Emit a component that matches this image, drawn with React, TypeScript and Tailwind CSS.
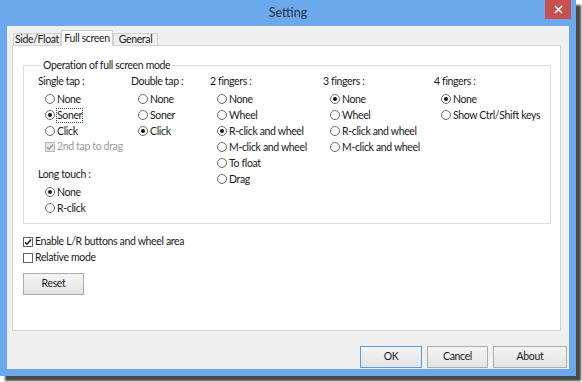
import React from "react";

function Radio({ label, checked, focus }: { label: string; checked?: boolean; focus?: boolean }) {
  return (
    <div className="flex h-[16px] items-center whitespace-nowrap pl-[7px]">
      <span className="flex h-[10px] w-[10px] shrink-0 items-center justify-center rounded-full border border-[#6b6b6b] bg-white">
        {checked && <span className="h-[4px] w-[4px] rounded-full bg-[#111]" />}
      </span>
      <span className={"ml-[2px] leading-[13px] " + (focus ? "outline outline-1 outline-dotted outline-[#444]" : "")}>
        {label}
      </span>
    </div>
  );
}

function Check({ label, checked, disabled, indent }: { label: string; checked?: boolean; disabled?: boolean; indent?: boolean }) {
  return (
    <div className={"flex h-[16px] items-center whitespace-nowrap " + (indent ? "pl-[7px]" : "")}>
      <span
        className={
          "flex h-[10px] w-[10px] shrink-0 items-center justify-center border " +
          (disabled ? "border-[#b8b8b8] bg-[#e6e6e6]" : "border-[#5f5f5f] bg-white")
        }
      >
        {checked && (
          <svg width="8" height="8" viewBox="0 0 8 8">
            <path d="M1 4.2 L3 6.2 L7 1.4" fill="none" stroke={disabled ? "#9a9a9a" : "#222"} strokeWidth="1.5" />
          </svg>
        )}
      </span>
      <span className={"ml-[2px] " + (disabled ? "text-[#9b9b9b]" : "")}>{label}</span>
    </div>
  );
}

function Header({ children }: { children: React.ReactNode }) {
  return <div className="flex h-[16px] items-center whitespace-nowrap">{children}</div>;
}

function Btn({ label, w, def }: { label: string; w: string; def?: boolean }) {
  return (
    <div
      className={
        "flex h-[22px] items-center justify-center border bg-gradient-to-b from-[#f4f4f4] to-[#e4e4e4] " +
        w +
        " " +
        (def ? "border-[#5aa0dc]" : "border-[#adadad]")
      }
    >
      {label}
    </div>
  );
}

export default function App() {
  return (
    <div className="h-[382px] w-[582px] bg-white font-['Lato',sans-serif] text-[10.5px] tracking-[-0.35px] text-[#1a1a1a]">
      <div className="flex h-[376px] w-[576px] flex-col bg-[#6ca8ec] px-[7px] pb-[7px] shadow-[5px_5px_2px_rgba(40,40,40,0.85)]">
        <div className="relative flex h-[26px] items-center justify-center">
          <span className="text-[12.5px] tracking-normal text-[#2a3440]">Setting</span>
          <div className="absolute right-[-2px] top-0 flex h-[19px] w-[26px] items-center justify-center bg-[#c75050]">
            <svg width="9" height="9" viewBox="0 0 9 9">
              <path d="M1 1 L8 8 M8 1 L1 8" stroke="white" strokeWidth="1.6" />
            </svg>
          </div>
        </div>
        <div className="flex flex-1 flex-col bg-[#f0f0f0] pt-[4px]">
          <div className="flex h-[15px] items-end whitespace-nowrap pl-[6px]">
            <div className="flex h-[12px] w-[48px] items-center justify-center border border-b-0 border-[#d0d0d0] bg-[#f0f0f0]">
              Side/Float
            </div>
            <div className="relative z-10 -mb-px flex h-[16px] w-[52px] items-center justify-center border border-b-0 border-[#d0d0d0] bg-white">
              Full screen
            </div>
            <div className="flex h-[12px] w-[45px] items-center justify-center border border-b-0 border-[#d0d0d0] bg-[#f0f0f0]">
              General
            </div>
          </div>
          <div className="ml-[5px] mr-[8px] h-[286px] border border-[#d6d6d6] bg-white pl-[10px] pr-[9px]">
            <fieldset className="mt-[12px] h-[166px] border border-[#dcdcdc] pl-[14px] pt-[2px]">
              <legend className="ml-[3px] px-[2px] leading-[14px]">Operation of full screen mode</legend>
              <div className="grid grid-cols-[93px_79px_113px_111px_1fr]">
                <div className="flex flex-col">
                  <Header>Single tap :</Header>
                  <div className="mt-[1px]">
                    <Radio label="None" />
                    <Radio label="Soner" checked focus />
                    <Radio label="Click" />
                    <Check label="2nd tap to drag" checked disabled indent />
                  </div>
                  <div className="mt-[12px]">
                    <Header>Long touch :</Header>
                  </div>
                  <div className="mt-[1px]">
                    <Radio label="None" checked />
                    <Radio label="R-click" />
                  </div>
                </div>
                <div className="flex flex-col">
                  <Header>Double tap :</Header>
                  <div className="mt-[1px]">
                    <Radio label="None" />
                    <Radio label="Soner" />
                    <Radio label="Click" checked />
                  </div>
                </div>
                <div className="flex flex-col">
                  <Header>2 fingers :</Header>
                  <div className="mt-[1px]">
                    <Radio label="None" />
                    <Radio label="Wheel" />
                    <Radio label="R-click and wheel" checked />
                    <Radio label="M-click and wheel" />
                    <Radio label="To float" />
                    <Radio label="Drag" />
                  </div>
                </div>
                <div className="flex flex-col">
                  <Header>3 fingers :</Header>
                  <div className="mt-[1px]">
                    <Radio label="None" checked />
                    <Radio label="Wheel" />
                    <Radio label="R-click and wheel" />
                    <Radio label="M-click and wheel" />
                  </div>
                </div>
                <div className="flex flex-col">
                  <Header>4 fingers :</Header>
                  <div className="mt-[1px]">
                    <Radio label="None" checked />
                    <Radio label="Show Ctrl/Shift keys" />
                  </div>
                </div>
              </div>
            </fieldset>
            <div className="mt-[10px]">
              <Check label="Enable L/R buttons and wheel area" checked />
              <Check label="Relative mode" />
            </div>
            <div className="mt-[7px]">
              <Btn label="Reset" w="w-[61px]" />
            </div>
          </div>
          <div className="mt-[15px] flex justify-end gap-[5px] pr-[2px]">
            <Btn label="OK" w="w-[62px]" def />
            <Btn label="Cancel" w="w-[61px]" />
            <Btn label="About" w="w-[74px]" />
          </div>
        </div>
      </div>
    </div>
  );
}
